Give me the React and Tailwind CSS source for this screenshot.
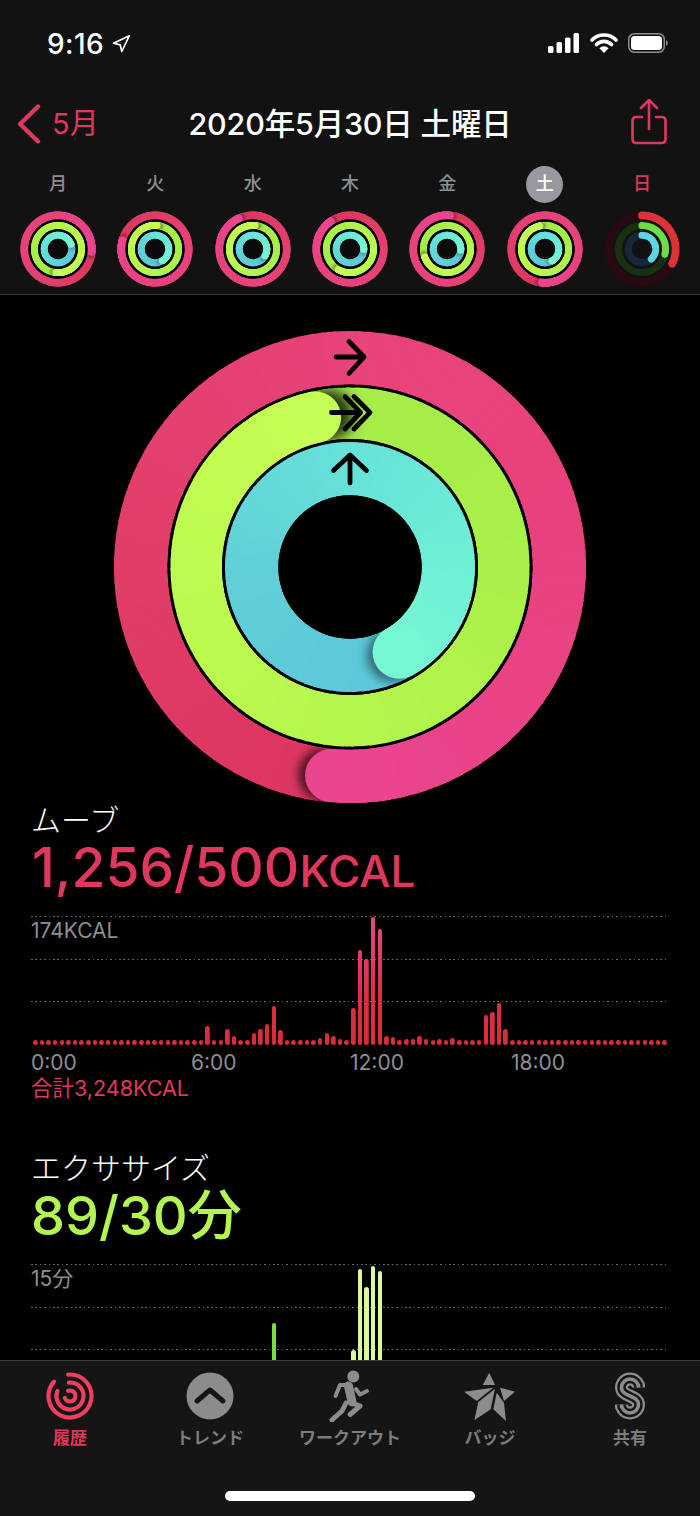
import React from "react";
import { Navigation } from "lucide-react";

const PINK = [[0,"#dc3560"],[0.24,"#e03e68"],[0.49,"#e8437a"],[0.75,"#e8427f"],[1,"#ea4690"]];
const GREEN = [[0,"#a5ec48"],[0.3,"#aaf04a"],[0.55,"#b6f74d"],[0.8,"#bffb50"],[1,"#c6fd54"]];
const BLUE = [[0,"#5cc6d9"],[0.33,"#60d0d8"],[0.58,"#66e2d8"],[0.83,"#6fefd5"],[1,"#76f7d4"]];

const hex = (c) => [1,3,5].map((i) => parseInt(c.slice(i,i+2),16));
function mix(stops,t){
  for(let i=1;i<stops.length;i++){
    if(t<=stops[i][0]){
      const [t0,c0]=stops[i-1],[t1,c1]=stops[i];
      const k=(t-t0)/(t1-t0),a=hex(c0),b=hex(c1);
      return `rgb(${a.map((v,j)=>Math.round(v+(b[j]-v)*k)).join(",")})`;
    }
  }
  return stops[stops.length-1][1];
}
const pt=(r,a)=>{const t=(a-90)*Math.PI/180;return [r*Math.cos(t),r*Math.sin(t)];};
function arc(r,a0,a1){
  const [x0,y0]=pt(r,a0),[x1,y1]=pt(r,a1);
  return `M${x0} ${y0}A${r} ${r} 0 ${a1-a0>180?1:0} 1 ${x1} ${y1}`;
}

function Track({r,w,head,stops,id,shadow,overlap}){
  const segs=[];
  const step=3;
  for(let d=0;d<360;d+=step){
    segs.push(<path key={d} d={arc(r,head+d,head+d+step+overlap)} stroke={mix(stops,(d+step/2)/360)} strokeWidth={w} fill="none"/>);
  }
  const tail=segs.slice(-16);
  const [cx,cy]=pt(r,head);
  const [sx,sy]=pt(r,head+shadow.shift);
  return (
    <g>
      {segs}
      <mask id={`m${id}`} maskUnits="userSpaceOnUse" x="-240" y="-240" width="480" height="480">
        <circle r={r} fill="none" stroke="#fff" strokeWidth={w}/>
      </mask>
      <g mask={`url(#m${id})`}>
        <circle cx={sx} cy={sy} r={w/2} fill="#000" fillOpacity={shadow.opacity} filter={`url(#b${id})`}/>
      </g>
      <filter id={`b${id}`} x="-100%" y="-100%" width="300%" height="300%"><feGaussianBlur stdDeviation={shadow.blur}/></filter>
      {tail}
      <circle cx={cx} cy={cy} r={w/2} fill={mix(stops,1)}/>
    </g>
  );
}

function Rings({id,size,geo,heads,children}){
  const ext=geo.ext;
  return (
    <svg width={size} height={size} viewBox={`${-ext} ${-ext} ${ext*2} ${ext*2}`} className="block">
      <circle r={geo.r[0]+geo.w[0]/2-0.2} fill="#000"/>
      <Track id={`${id}p`} r={geo.r[0]} w={geo.w[0]} head={heads[0]} stops={PINK} shadow={geo.shadow[0]} overlap={geo.overlap}/>
      <circle r={geo.r[0]-geo.w[0]/2} fill="#000"/>
      <Track id={`${id}g`} r={geo.r[1]} w={geo.w[1]} head={heads[1]} stops={GREEN} shadow={geo.shadow[1]} overlap={geo.overlap}/>
      <circle r={geo.r[1]-geo.w[1]/2} fill="#000"/>
      <Track id={`${id}b`} r={geo.r[2]} w={geo.w[2]} head={heads[2]} stops={BLUE} shadow={geo.shadow[2]} overlap={geo.overlap}/>
      <circle r={geo.r[2]-geo.w[2]/2} fill={geo.hole}/>
      {children}
    </svg>
  );
}

const BIG={ext:236,r:[209.25,153.75,98.35],w:[53.5,51.5,53.3],hole:"#000",overlap:0.6,
  shadow:[{shift:2,opacity:0.6,blur:4},{shift:4.5,opacity:0.8,blur:7},{shift:4,opacity:0.45,blur:5}]};
const SMALL={ext:38,r:[33.6,23.5,13.7],w:[7.8,7,7],hole:"#0b0b0b",overlap:4,
  shadow:[{shift:5,opacity:0.25,blur:1},{shift:7,opacity:0.3,blur:1},{shift:12,opacity:0.2,blur:1}]};

function SundayRings(){
  const t=[[33.6,7.8,"#2a0a10","#dc3238",116],[23.5,7,"#18300f","#6fdc45",103],[13.7,7,"#14283a","#60d4e0",137]];
  return (
    <svg width="76" height="76" viewBox="-38 -38 76 76" className="block">
      {t.map(([r,w,bg,fg,end])=>(
        <g key={r}>
          <circle r={r} fill="none" stroke={bg} strokeWidth={w}/>
          <path d={arc(r,0,end)} fill="none" stroke={fg} strokeWidth={w} strokeLinecap="round"/>
        </g>
      ))}
    </svg>
  );
}

const DAYS=[
  ["月",[95,185,70]],["火",[285,5,148]],["水",[335,5,120]],["木",[325,210,92]],["金",[5,250,95]],["土",[185,347,150]],
];

function Status(){
  return (
    <div className="flex h-[86px] items-start justify-between pl-[47px] pr-[32px] pt-[28px]">
      <div className="flex items-center gap-[7px] pt-[1px]">
        <span className="text-[28px] font-medium leading-[30px] tracking-[0.4px] text-white">9:16</span>
        <Navigation size={20} strokeWidth={2} color="#fff"/>
      </div>
      <div className="flex items-center gap-[10px] pt-[5px]">
        <svg width="32" height="20" viewBox="0 0 32 20" className="block">
          <rect x="0" y="13" width="5.5" height="7" rx="1.5" fill="#fff"/>
          <rect x="8.5" y="9" width="5.5" height="11" rx="1.5" fill="#fff"/>
          <rect x="17" y="4.5" width="5.5" height="15.5" rx="1.5" fill="#fff"/>
          <rect x="25.5" y="0" width="5.5" height="20" rx="1.5" fill="#fff"/>
        </svg>
        <svg width="28" height="20" viewBox="0 0 28 20" className="block">
          <path d="M2 7a17 17 0 0 1 24 0M6.5 11.5a10.5 10.5 0 0 1 15 0" fill="none" stroke="#fff" strokeWidth="3.6" strokeLinecap="round"/>
          <path d="M14 20l-4.6-4.8a6.6 6.6 0 0 1 9.2 0z" fill="#fff"/>
        </svg>
        <svg width="40" height="20" viewBox="0 0 40 20" className="block">
          <rect x="0.75" y="0.75" width="35.5" height="18.5" rx="5.5" fill="none" stroke="#8e8e8e" strokeWidth="1.5"/>
          <rect x="3" y="3" width="31" height="14" rx="3.5" fill="#fff"/>
          <path d="M38 7v6a3 3 0 0 0 1.8-3 3 3 0 0 0-1.8-3z" fill="#8e8e8e"/>
        </svg>
      </div>
    </div>
  );
}

function NavBar(){
  return (
    <div className="flex h-[76px] items-center justify-between pl-[17px] pr-[33px]">
      <div className="flex w-[136px] items-center gap-[11px]">
        <svg width="24" height="40" viewBox="0 0 24 40" className="block">
          <path d="M21 2.5L3 20l18 17.5" fill="none" stroke="#e0375f" strokeWidth="4.4" strokeLinecap="round" strokeLinejoin="round"/>
        </svg>
        <span className="text-[29px] leading-[36px] text-[#e0375f]">5月</span>
      </div>
      <span className="text-[30.5px] font-medium leading-[36px] tracking-[-0.2px] text-white">2020年5月30日 土曜日</span>
      <div className="flex w-[120px] justify-end pb-[4px]">
        <svg width="36" height="46" viewBox="0 0 36 46" className="block">
          <path d="M11 18H5a3.5 3.5 0 0 0-3.5 3.5v19A3.5 3.5 0 0 0 5 44h26a3.5 3.5 0 0 0 3.5-3.5v-19A3.5 3.5 0 0 0 31 18h-6" fill="none" stroke="#e0375f" strokeWidth="2.6" strokeLinecap="round"/>
          <path d="M18 30V2M10 9l8-8 8 8" fill="none" stroke="#e0375f" strokeWidth="2.6" strokeLinecap="round" strokeLinejoin="round"/>
        </svg>
      </div>
    </div>
  );
}

function Week(){
  return (
    <div className="mt-[3.5px] grid grid-cols-7 px-[9.4px]">
      {DAYS.map(([d,h],i)=>(
        <div key={d} className="flex flex-col items-center">
          {d==="土"
            ? <span className="flex h-[37px] w-[37px] items-center justify-center rounded-full bg-[#98989e] text-[18px] font-medium leading-none text-white">{d}</span>
            : <span className="flex h-[37px] items-center text-[18px] font-medium leading-none text-[#8e8e93]">{d}</span>}
          <div className="mt-[8px]"><Rings id={`s${i}`} size={76} geo={SMALL} heads={h}/></div>
        </div>
      ))}
      <div className="flex flex-col items-center">
        <span className="flex h-[37px] items-center text-[18px] font-medium leading-none text-[#e0375f]">日</span>
        <div className="mt-[8px]"><SundayRings/></div>
      </div>
    </div>
  );
}

function Line(){
  return <div className="h-px bg-[repeating-linear-gradient(90deg,#6a6a6a_0_1.5px,transparent_1.5px_4.4px)]"/>;
}

function Chart({label,bars,barClass}){
  return (
    <div className="grid">
      <div className="[grid-area:1/1] pl-[31px] pr-[32px]">
        <Line/>
        <div className="h-[41.5px] pt-[1px] text-[21px] leading-[26px] text-[#8e8e93]">{label}</div>
        <Line/>
        <div className="h-[41.5px]"/>
        <Line/>
        <div className="h-[43px]"/>
      </div>
      <div className="[grid-area:1/1] ml-[33px] flex w-[634px] items-end justify-between">
        {bars.map((b,i)=>(
          <div key={i} className={`w-[4.5px] rounded-full ${b.c||barClass}`} style={{height:b.h}}/>
        ))}
      </div>
    </div>
  );
}

const moveH={26:19,29:16,30:9,33:12,34:16,35:21,36:39,37:15,43:7,44:12,45:9,46:6,48:37,49:95,50:86,51:128,52:116,53:9,54:8,56:6,57:6,58:9,59:6,61:6,63:7,68:30,69:33,70:42,71:16};
const moveBars=Array.from({length:96},(_,i)=>({h:moveH[i]||5}));
const GREEN_BAR="bg-[#7fdc3e]";
const PALE_BAR="bg-[#dcf89c]";
const exH={36:[70,GREEN_BAR],48:[43,PALE_BAR],49:[124,PALE_BAR],50:[106,PALE_BAR],51:[127,PALE_BAR],52:[122,PALE_BAR],69:[32,"bg-[#90e04a]"],70:[32,"bg-[#90e04a]"]};
const exBars=Array.from({length:96},(_,i)=>exH[i]?{h:exH[i][0],c:exH[i][1]}:{h:0,c:"bg-transparent"});

function BigArrows(){
  const p={fill:"none",stroke:"#000",strokeWidth:4.8,strokeLinecap:"round",strokeLinejoin:"round"};
  return (
    <g {...p}>
      <path d="M-14 -210H13.5M-1 -225.5L14 -210L-1 -193.5"/>
      <path d="M-18.5 -154.5H10M-5 -170.5L10.5 -154.5L-5 -138M4 -170.5L20 -154.5L4 -138"/>
      <path d="M0 -84V-111.5M-16.5 -96.5L0 -112L16.5 -96.5"/>
    </g>
  );
}

function Tab({label,active,children}){
  return (
    <div className="flex flex-col items-center">
      <div className="flex h-[52px] items-center justify-center">{children}</div>
      <span className={`mt-[4px] text-[17px] font-semibold leading-[24px] ${active?"text-[#e0375f]":"text-[#7c7c7a]"}`}>{label}</span>
    </div>
  );
}

const S_PATH="M24.5 13V15.5A8.5 8.5 0 1 0 7.5 15.5C7.5 25 24.5 23 24.5 32.5A8.5 8.5 0 1 1 7.5 32.5V35";

function TabBar(){
  return (
    <div className="absolute inset-x-0 bottom-0 flex h-[156px] flex-col border-t border-[#3c3c3a] bg-[#141514]">
      <div className="grid grid-cols-5 pt-[9px]">
        <Tab label="履歴" active>
          <svg width="50" height="50" viewBox="-25 -25 50 50" className="block">
            <g fill="none" stroke="#ee3f63" strokeWidth="4.2" strokeLinecap="round">
              <path d={arc(21.5,-5,312)}/>
              <path d={arc(13.5,-5,292)}/>
              <path d={arc(5.5,-20,250)}/>
            </g>
          </svg>
        </Tab>
        <Tab label="トレンド">
          <svg width="48" height="48" viewBox="0 0 48 48" className="block">
            <circle cx="24" cy="24" r="23.5" fill="#8c8c8a"/>
            <path d="M11 29L24 18l13 11" fill="none" stroke="#141514" strokeWidth="5" strokeLinecap="round" strokeLinejoin="round"/>
          </svg>
        </Tab>
        <Tab label="ワークアウト">
          <svg width="42" height="52" viewBox="0 0 42 52" className="block">
            <circle cx="24.3" cy="6.5" r="6" fill="#8c8c8a"/>
            <g fill="none" stroke="#8c8c8a" strokeLinecap="round" strokeLinejoin="round">
              <path d="M19.5 16L23 32" strokeWidth="9"/>
              <path d="M23 33L31 36L21 44.5" strokeWidth="5"/>
              <path d="M17 33L13 41L3 50" strokeWidth="5"/>
              <path d="M19 15H11L6.5 26" strokeWidth="4"/>
              <path d="M27 19L31 24.5L38 21" strokeWidth="4"/>
            </g>
          </svg>
        </Tab>
        <Tab label="バッジ">
          <svg width="52" height="50" viewBox="0 0 52 50" className="block">
            <g fill="#8c8c8a">
              <path d="M25.3 1.7L18.7 14H31z"/>
              <path d="M0 20.7L29.3 16.7L12.7 30z"/>
              <path d="M31 17.7L14.3 31L10.3 49.3L26.7 38.3z"/>
              <path d="M36 16.7L51 20.7L40 30z"/>
              <path d="M32.7 21.7L40 31.7L42 50L29.3 38.3z"/>
            </g>
          </svg>
        </Tab>
        <Tab label="共有">
          <svg width="32" height="48" viewBox="0 0 32 48" className="block">
            <g fill="none" strokeLinecap="round">
              <path d={S_PATH} stroke="#8c8c8a" strokeWidth="13"/>
              <path d={S_PATH} stroke="#141514" strokeWidth="8.4"/>
              <path d={S_PATH} stroke="#8c8c8a" strokeWidth="3.6"/>
            </g>
          </svg>
        </Tab>
      </div>
      <div className="mt-[41px] flex justify-center">
        <div className="h-[10px] w-[250px] rounded-full bg-white"/>
      </div>
    </div>
  );
}

export default function App(){
  return (
    <div className="relative h-[1516px] w-[700px] overflow-hidden bg-black font-['Inter','Noto_Sans_CJK_JP',sans-serif]">
      <header className="h-[295px] border-b border-[#3a3a3c] bg-[#121212]">
        <Status/>
        <NavBar/>
        <Week/>
      </header>
      <main>
        <div className="flex justify-center pt-[36px]">
          <Rings id="big" size={472} geo={BIG} heads={[185,347,150]}><BigArrows/></Rings>
        </div>
        <section className="mt-[1px]">
          <div className="pl-[31px] text-[30px] font-light leading-[32px] text-white">ムーブ</div>
          <div className="mt-[1px] flex h-[60px] items-baseline pl-[32px] leading-[60px] text-[#e0375f]">
            <span className="text-[55px] font-medium">1,256/500</span>
            <span className="text-[44px] font-medium">KCAL</span>
          </div>
          <div className="mt-[19px]">
            <Chart label="174KCAL" bars={moveBars} barClass="bg-[linear-gradient(to_top,#d92c38_0,#de2e42_50px,#ea4688_128px)] bg-[length:100%_128px] bg-bottom"/>
          </div>
          <div className="flex pt-[5px] text-[21px] leading-[26px] text-[#8e8e93]">
            <span className="w-[160px] pl-[31px]">0:00</span>
            <span className="w-[159px] pl-[31px]">6:00</span>
            <span className="w-[161px] pl-[31px]">12:00</span>
            <span className="pl-[31px]">18:00</span>
          </div>
          <div className="pl-[31px] text-[21.5px] leading-[25px] text-[#e0375f]">合計3,248KCAL</div>
        </section>
        <section className="mt-[49px]">
          <div className="pl-[31px] text-[30px] font-light leading-[36px] text-white">エクササイズ</div>
          <div className="pl-[31px] text-[54px] font-medium leading-[60px] text-[#b5f552]">89/30分</div>
          <div className="mt-[18px]">
            <Chart label="15分" bars={exBars} barClass=""/>
          </div>
        </section>
      </main>
      <TabBar/>
    </div>
  );
}
